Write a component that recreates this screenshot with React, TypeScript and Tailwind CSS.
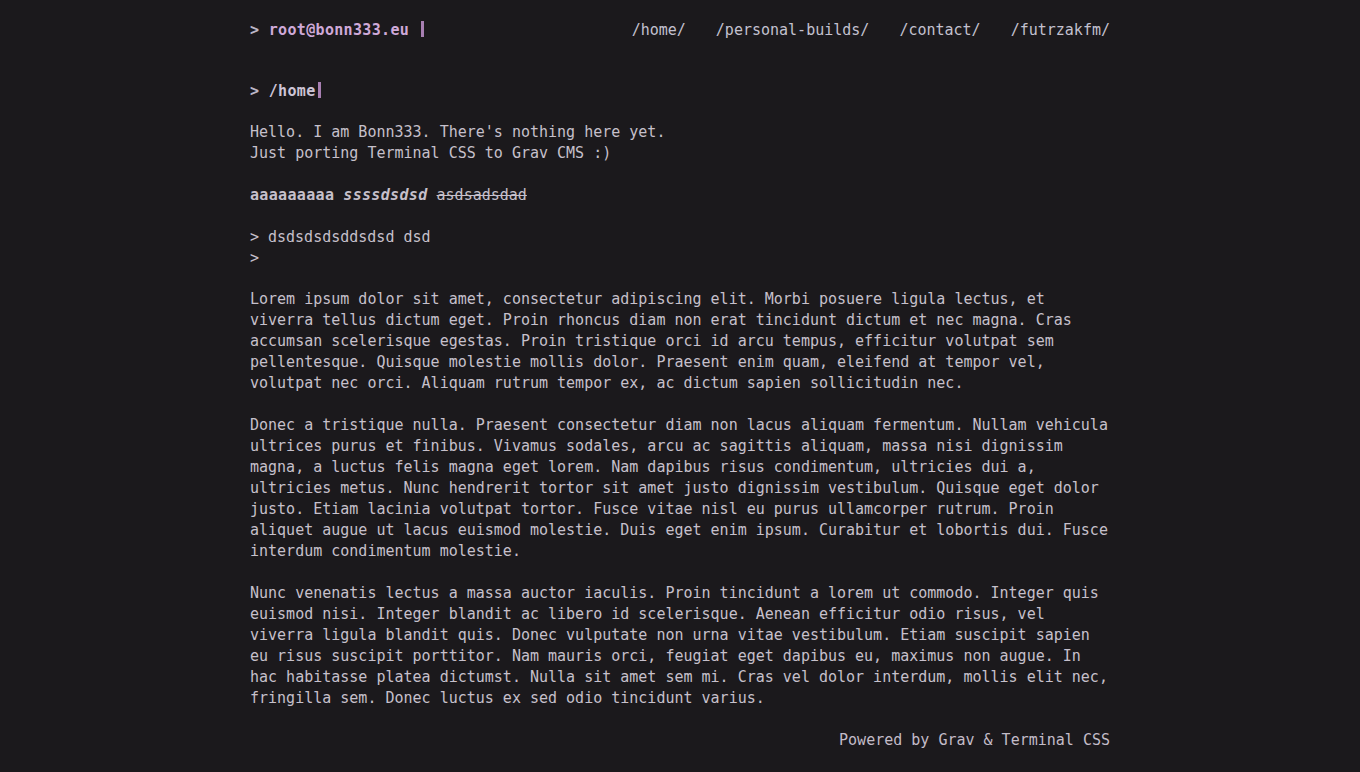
const navLinks = ["/home/", "/personal-builds/", "/contact/", "/futrzakfm/"];

const paragraphs = [
  "Lorem ipsum dolor sit amet, consectetur adipiscing elit. Morbi posuere ligula lectus, et viverra tellus dictum eget. Proin rhoncus diam non erat tincidunt dictum et nec magna. Cras accumsan scelerisque egestas. Proin tristique orci id arcu tempus, efficitur volutpat sem pellentesque. Quisque molestie mollis dolor. Praesent enim quam, eleifend at tempor vel, volutpat nec orci. Aliquam rutrum tempor ex, ac dictum sapien sollicitudin nec.",
  "Donec a tristique nulla. Praesent consectetur diam non lacus aliquam fermentum. Nullam vehicula ultrices purus et finibus. Vivamus sodales, arcu ac sagittis aliquam, massa nisi dignissim magna, a luctus felis magna eget lorem. Nam dapibus risus condimentum, ultricies dui a, ultricies metus. Nunc hendrerit tortor sit amet justo dignissim vestibulum. Quisque eget dolor justo. Etiam lacinia volutpat tortor. Fusce vitae nisl eu purus ullamcorper rutrum. Proin aliquet augue ut lacus euismod molestie. Duis eget enim ipsum. Curabitur et lobortis dui. Fusce interdum condimentum molestie.",
  "Nunc venenatis lectus a massa auctor iaculis. Proin tincidunt a lorem ut commodo. Integer quis euismod nisi. Integer blandit ac libero id scelerisque. Aenean efficitur odio risus, vel viverra ligula blandit quis. Donec vulputate non urna vitae vestibulum. Etiam suscipit sapien eu risus suscipit porttitor. Nam mauris orci, feugiat eget dapibus eu, maximus non augue. In hac habitasse platea dictumst. Nulla sit amet sem mi. Cras vel dolor interdum, mollis elit nec, fringilla sem. Donec luctus ex sed odio tincidunt varius.",
];

const Cursor = ({ className = "" }: { className?: string }) => (
  <span className={"inline-block w-[3px] h-[16px] bg-[#a87fb2] align-[-2px] " + className} />
);

export default function App() {
  return (
    <div className="min-h-screen bg-[#1b191c] text-[#c6c0cb] font-['DejaVu_Sans_Mono',monospace] text-[15px] leading-[21px]">
      <div className="mx-auto w-[860px] pt-[20px] pb-[22px]">
        {/* header */}
        <header className="flex items-center justify-between">
          <div className="font-bold tracking-[0.33px]">
            <span className="text-[#bcb6c6]">&gt; </span>
            <span className="text-[#cfa9d8]">root@bonn333.eu </span>
            <Cursor className="ml-[2px]" />
          </div>
          <nav className="flex gap-[30px]">
            {navLinks.map((l) => (
              <a key={l} href="#" className="text-[#c3c1cf]">
                {l}
              </a>
            ))}
          </nav>
        </header>

        <main className="mt-[40px]">
          <h1 className="font-bold tracking-[0.33px] mb-[20px] text-[#cdc4d6]">
            <span className="text-[#bcb6c6]">&gt; </span>/home
            <Cursor className="ml-[2px]" />
          </h1>

          <p className="mb-[21px]">
            Hello. I am Bonn333. There's nothing here yet.
            <br />
            Just porting Terminal CSS to Grav CMS :)
          </p>

          <p className="mb-[21px]">
            <strong className="tracking-[0.33px]">aaaaaaaaa</strong>{" "}
            <strong className="italic tracking-[0.33px]">ssssdsdsd</strong> <del>asdsadsdad</del>
          </p>

          <blockquote className="flex mb-[20px]">
            <div className="w-[18px] shrink-0">
              &gt;
              <br />
              &gt;
            </div>
            <div>dsdsdsdsddsdsd dsd</div>
          </blockquote>

          {paragraphs.map((p, i) => (
            <p key={i} className="mb-[21px]">
              {p}
            </p>
          ))}
        </main>

        <footer className="text-right text-[#c3bcc8]">Powered by Grav &amp; Terminal CSS</footer>
      </div>
    </div>
  );
}
